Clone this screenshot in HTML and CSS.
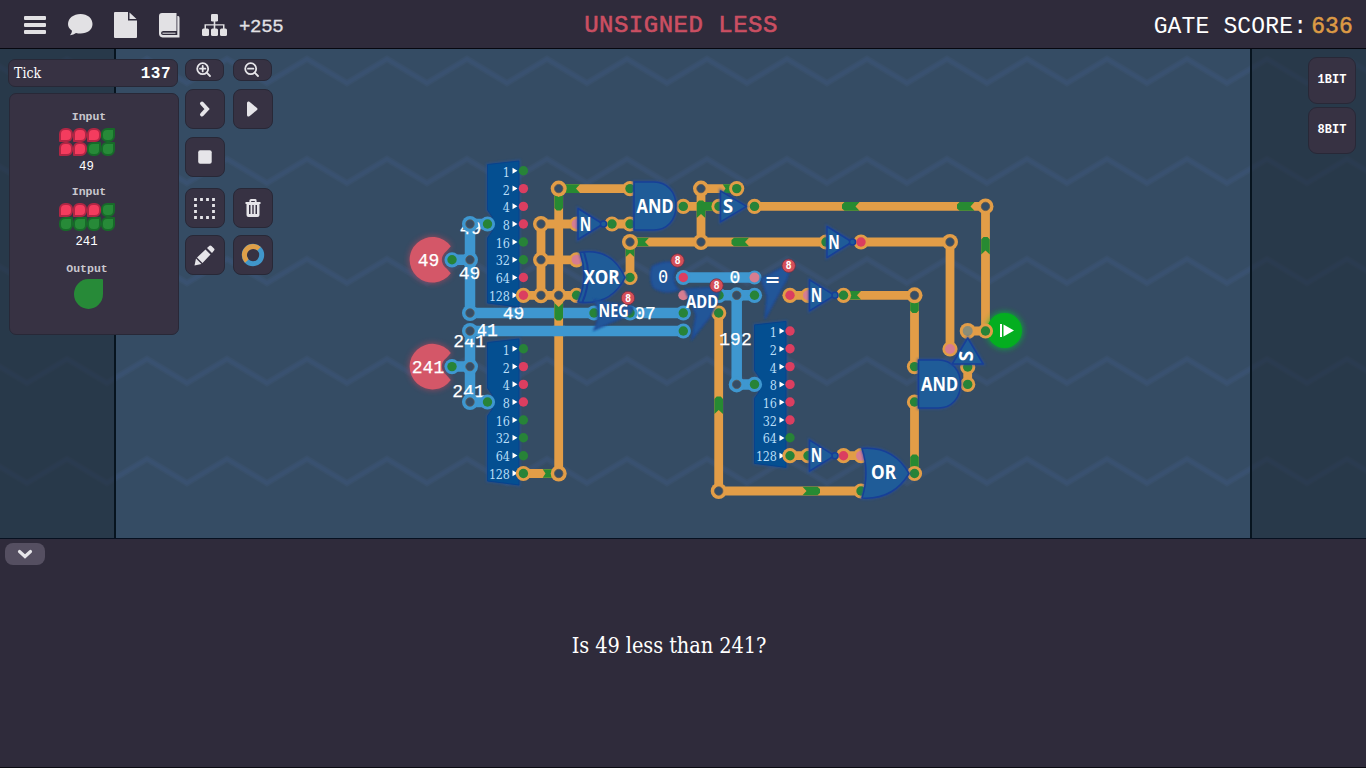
FILE: index.html
```html
<!DOCTYPE html>
<html lang="en">
<head>
<meta charset="utf-8">
<title>Unsigned Less</title>
<link rel="stylesheet" href="styles.css">
</head>
<body>
<header class="topbar">
  <nav class="menu">
    <svg class="menu-icon" width="22" height="18" viewBox="0 0 22 18"><rect y="0" width="22" height="4" rx="1"/><rect y="7" width="22" height="4" rx="1"/><rect y="14" width="22" height="4" rx="1"/></svg>
    <svg class="menu-icon" width="25" height="22" viewBox="0 0 25 22"><path d="M12.500 0C19.500 0 24.500 4.200 24.500 10S19.500 19.500 12.500 19.500Q10 19.500 8 19Q5.500 21 2 21.300Q4 19 4 16.800Q0 14 0 10C0 4.200 5.500 0 12.500 0Z"/></svg>
    <svg class="menu-icon" width="23" height="26" viewBox="0 0 23 26"><path d="M1 0H14V8.500H23V25Q23 26 22 26H1Q0 26 0 25V1Q0 0 1 0ZM15.500 .5L22.500 7H15.500Z"/></svg>
    <svg class="menu-icon" width="21" height="25" viewBox="0 0 21 25"><path d="M3 0H17.500V18H4Q2 18.500 2 20.300Q2.200 22 4 22H18.300V3H19.200Q20.500 3 20.500 5V24.500H3.500Q0 24 0 20.500V3Q0 0 3 0Z"/><path class="book-page" d="M3.500 20.200H16.500"/></svg>
    <span class="cluster">
      <svg class="menu-icon" width="25" height="22" viewBox="0 0 25 22"><rect x="9" width="7" height="7.500" rx="1.300"/><rect y="14.500" width="7" height="7.500" rx="1.500"/><rect x="9" y="14.500" width="7" height="7.500" rx="1.500"/><rect x="18" y="14.500" width="7" height="7.500" rx="1.500"/><path d="M11.700 7H13.300V10.200H22.500V15H21V11.500H13.300V15H11.700V11.500H4V15H2.500V10.200H11.700Z"/></svg>
      <span class="bonus">+255</span>
    </span>
  </nav>
  <h1 class="title">UNSIGNED LESS</h1>
  <p class="score">GATE SCORE:<b class="score-value">636</b></p>
</header>

<main class="stage">
  <svg class="board" width="1366" height="489" viewBox="0 49 1366 489">
    <defs>
      <pattern id="zig" x="27" y="49" width="80" height="100" patternUnits="userSpaceOnUse"><path class="zig faint" d="M-10 28L0 34L40 10L80 34L90 28"/><path class="zig" d="M-10 28L0 34L40 10L80 34L90 28"/></pattern>
      <filter id="glow" x="-50%" y="-50%" width="200%" height="200%"><feGaussianBlur stdDeviation="3"/></filter>
      <filter id="soft" x="-30%" y="-30%" width="160%" height="160%"><feGaussianBlur stdDeviation="1"/></filter>
      <g id="o"><circle class="ring-o" r="8"/><circle class="hole" r="4.200"/></g>
      <g id="b"><circle class="ring-b" r="8"/><circle class="hole" r="4.200"/></g>
      <g id="og"><circle class="ring-o" r="7.600"/><circle class="on" r="4.700"/></g>
      <g id="or"><circle class="ring-o" r="7.600"/><circle class="off" r="4.700"/></g>
      <g id="op"><circle class="ring-o" r="7.600"/><circle class="faded" r="5"/></g>
      <g id="bg"><circle class="ring-b" r="7.600"/><circle class="on" r="4.700"/></g>
      <g id="br"><circle class="ring-b" r="7.600"/><circle class="off" r="4.700"/></g>
      <circle id="g" class="on" r="4.700"/>
      <circle id="r" class="off" r="4.700"/>
      <path id="a" class="pulse" d="M-6 -4.300H9L5 0L9 4.300H-6L-8.500 2V-2Z"/>
      <g id="and"><path class="gate-glow" d="M0 0H20C33 0 42 10 42 24S33 48 20 48H0Z"/><path class="gate" d="M0 0H20C33 0 42 10 42 24S33 48 20 48H0Z"/></g>
      <g id="not"><path class="gate-glow" d="M0 -15.500L26 0L0 15.500Z"/><path class="gate" d="M0 -15.500L25 0L0 15.500Z"/><circle class="gate" cx="25.500" r="3"/></g>
      <g id="switch"><path class="gate-glow" d="M0 -15.500L26 0L0 15.500Z"/><path class="gate" d="M0 -15.500L26 0L0 15.500Z"/></g>
      <path id="src" d="M19 -13.500A22.800 22.800 0 1 0 19 13.500L15 9Q10 5 10 0T15 -9Z"/>
      <g id="splitter">
        <path class="split-glow" d="M0 -59.500L31.500 -63V83L0 79V14Q6 8 6 0T0 -14Z"/>
        <path class="split" d="M0 -59.500L31.500 -63V83L0 79V14Q6 8 6 0T0 -14Z"/>
        <g class="split-text">
          <text x="22" y="-47.300">1</text><text x="22" y="-29.500">2</text><text x="22" y="-11.700">4</text><text x="22" y="5.500">8</text><text x="22" y="23.500">16</text><text x="22" y="41.300">32</text><text x="22" y="59.100">64</text><text x="22" y="76.900" textLength="20.500" lengthAdjust="spacingAndGlyphs">128</text>
        </g>
        <path class="tick" d="M25 -56.300l5 3l-5 3zM25 -38.500l5 3l-5 3zM25 -20.700l5 3l-5 3zM25 -2.900l5 3l-5 3zM25 14.900l5 3l-5 3zM25 32.700l5 3l-5 3zM25 50.500l5 3l-5 3zM25 68.300l5 3l-5 3z"/>
      </g>
      <g id="badge"><circle class="badge" r="6.700"/><text class="badge-text" y="3.600">8</text></g>
    </defs>

    <rect x="0" y="49" width="1366" height="489" fill="url(#zig)"/>
    <rect class="shade" x="0" y="49" width="115" height="489"/>
    <rect class="shade" x="1251" y="49" width="115" height="489"/>
    <path class="edge" d="M115 49V538M1251 49V538"/>

    <!-- bus wires -->
    <path class="bus" d="M487.500 224H470V313H683M452 259.800H470M683 331H470V402H487.500M452 366.600H470M683 277.500H754.500M719 295.300H754.500M736.700 295.300V384.400H754.500"/>

    <!-- bit wires -->
    <path class="wire" d="M630 188.600H558.700V473.500H523.400M523.400 295.300H576.600M541 295.300V224H576.600M541 259.800H576.600M612 224H630M630 277.500V242H826M861 242H950V349M701 242V188.600H737M683 206.400H719M754.500 206.400H985.500V331H967.700M790 295.300H808M843.500 295.300H914.500V366.600M914.500 402V473.500M967.700 366V384.400M790 455.700H808M843.500 455.700H861M718.700 313V491H861"/>
    <path class="bus-cross" d="M553 331H565"/>

    <g class="pulses">
      <use href="#a" x="571" y="188.600"/>
      <use href="#a" transform="translate(558.700 202) rotate(-90)"/>
      <use href="#a" transform="translate(558.700 312) rotate(-90)"/>
      <use href="#a" transform="translate(549 473.500) rotate(180) scale(.7 1)"/>
      <use href="#a" transform="translate(701 209) rotate(90)"/>
      <use href="#a" x="710" y="206.400"/>
      <use href="#a" transform="translate(729 188.600) rotate(180) scale(.7 1)"/>
      <use href="#a" x="640" y="242"/>
      <use href="#a" transform="translate(630 248) rotate(90)"/>
      <use href="#a" x="740" y="242"/>
      <use href="#a" x="850.500" y="206.400"/>
      <use href="#a" x="965.500" y="206.400"/>
      <use href="#a" transform="translate(985.500 245.500) rotate(90)"/>
      <use href="#a" x="852" y="295.300"/>
      <use href="#a" transform="translate(914.500 304.500) rotate(-90)"/>
      <use href="#a" transform="translate(914.500 463) rotate(90)"/>
      <use href="#a" transform="translate(718.700 405) rotate(90)"/>
      <use href="#a" transform="translate(811.500 491) rotate(180)"/>
    </g>

    <!-- bus values -->
    <g class="value">
      <text x="470.500" y="234">49</text><text x="469.500" y="279">49</text><text x="513.500" y="319">49</text>
      <text x="487" y="336">41</text><text x="469.500" y="347">241</text><text x="468.500" y="396.500">241</text>
      <text x="645" y="319">07</text><text x="735" y="283">0</text><text x="735.500" y="345">192</text>
    </g>

    <!-- sources -->
    <use class="source-glow" href="#src" x="431.800" y="259.800"/><use class="source" href="#src" x="431.800" y="259.800"/>
    <use class="source-glow" href="#src" x="431.800" y="366.600"/><use class="source" href="#src" x="431.800" y="366.600"/>
    <g class="value"><text x="428.500" y="266">49</text><text x="428" y="373">241</text></g>

    <!-- junctions -->
    <use href="#b" x="470" y="224"/><use href="#b" x="470" y="259.800"/><use href="#b" x="470" y="313"/><use href="#b" x="470" y="331"/><use href="#b" x="470" y="366.600"/><use href="#b" x="470" y="402"/><use href="#b" x="736.700" y="295.300"/><use href="#b" x="736.700" y="384.400"/>
    <use href="#o" x="541" y="224"/><use href="#o" x="541" y="259.800"/><use href="#o" x="541" y="295.300"/><use href="#o" x="558.700" y="188.600"/><use href="#o" x="558.700" y="295.300"/><use href="#o" x="558.700" y="473.500"/>
    <use href="#o" x="630" y="242"/><use href="#o" x="701" y="188.600"/><use href="#o" x="701" y="242"/><use href="#o" x="985.500" y="206.400"/><use href="#o" x="950" y="242"/><use href="#o" x="914.500" y="295.300"/><use href="#o" x="718.700" y="491"/>

    <!-- pins -->
    <use href="#splitter" x="487.500" y="224"/><use href="#splitter" x="487.500" y="402"/><use href="#splitter" x="754.500" y="384.400"/>
    <use href="#bg" x="452" y="259.800"/><use href="#bg" x="487.500" y="224"/><use href="#bg" x="452" y="366.600"/><use href="#bg" x="487.500" y="402"/><use href="#bg" x="754.500" y="384.400"/><use href="#bg" x="754.500" y="295.300"/><use href="#bg" x="594" y="313"/><use href="#bg" x="630" y="313"/><use href="#bg" x="683.300" y="313"/><use href="#bg" x="683.300" y="331"/><use href="#bg" x="719" y="295.300"/><circle class="ring-b" cx="754.500" cy="277.500" r="7"/><circle class="faded" cx="754.500" cy="277.500" r="5"/>
    <circle class="faded" cx="683.300" cy="295.300" r="5"/>
    <use href="#or" x="523.400" y="295.300"/><use href="#og" x="523.400" y="473.500"/><use href="#op" x="576.600" y="224"/><use href="#op" x="576.600" y="259.800"/><use href="#og" x="576.600" y="295.300"/>
    <use href="#og" x="612" y="224"/><use href="#og" x="630" y="224"/><use href="#og" x="630" y="188.600"/><use href="#og" x="630" y="277.500"/><use href="#og" x="683.300" y="206.400"/><use href="#og" x="719" y="206.400"/><use href="#og" x="736.700" y="188.600"/><use href="#og" x="754.500" y="206.400"/><use href="#og" x="826" y="242"/><use href="#or" x="861" y="242"/>
    <use href="#or" x="790" y="295.300"/><use href="#op" x="808" y="295.300"/><use href="#og" x="843.500" y="295.300"/><use href="#og" x="914.500" y="366.600"/><use href="#og" x="914.500" y="402"/><use href="#og" x="914.500" y="473.500"/><use href="#op" x="950" y="349"/><circle class="ring-o" cx="967.700" cy="331" r="8"/><circle class="idle" cx="967.700" cy="331" r="5"/>
    <use href="#og" x="967.700" y="367"/><use href="#og" x="967.700" y="384.400"/><use href="#og" x="790" y="455.700"/><use href="#og" x="808" y="455.700"/><use href="#or" x="843.500" y="455.700"/><use href="#op" x="861" y="455.700"/><use href="#og" x="861" y="491"/><use href="#og" x="718.700" y="313"/>
    <use href="#g" x="523.400" y="170.800"/><use href="#r" x="523.400" y="188.600"/><use href="#r" x="523.400" y="206.400"/><use href="#r" x="523.400" y="224"/><use href="#g" x="523.400" y="242"/><use href="#g" x="523.400" y="259.800"/><use href="#r" x="523.400" y="277.500"/>
    <use href="#g" x="523.400" y="348.800"/><use href="#r" x="523.400" y="366.600"/><use href="#r" x="523.400" y="384.400"/><use href="#r" x="523.400" y="402"/><use href="#g" x="523.400" y="420"/><use href="#g" x="523.400" y="437.800"/><use href="#g" x="523.400" y="455.700"/>
    <use href="#r" x="790" y="331"/><use href="#r" x="790" y="348.800"/><use href="#r" x="790" y="366.600"/><use href="#r" x="790" y="384.400"/><use href="#r" x="790" y="402"/><use href="#r" x="790" y="420"/><use href="#g" x="790" y="437.800"/>

    <!-- gates -->
    <use href="#and" x="634" y="182"/><use href="#and" x="918.500" y="360"/>
    <use href="#not" x="578" y="224"/><use href="#not" x="827" y="242"/><use href="#not" x="809.500" y="295.300"/><use href="#not" x="809.500" y="455.700"/>
    <use href="#switch" x="720.500" y="206.400"/><use href="#switch" transform="translate(967.700 364) rotate(-90)"/>
    <path class="gate-glow" d="M580 252.500Q611 247 625 277.500Q611 306 578 302Q589 277 580 252.500Z"/>
    <path class="gate" d="M580 252.500Q611 247 625 277.500Q611 306 578 302Q589 277 580 252.500Z"/><path class="gate-line" d="M584 252.500Q593 277 582.500 302"/>
    <path class="gate-glow" d="M862 448.500Q893 446 909 473.500Q893 500 862 498Q870 473 862 448.500Z"/>
    <path class="gate" d="M862 448.500Q893 446 909 473.500Q893 500 862 498Q870 473 862 448.500Z"/>
    <path class="blob" d="M594 300L633 307Q633 314 626 316L594 330Q602 314 594 300Z"/>
    <path class="blob" d="M685 289L720 287Q719 302 709 318L692 339L696 315Z"/>
    <path class="blob" d="M761 279L789 264Q790 276 783 286L765 319L767 296Z"/>
    <path class="blob" d="M652 267Q665 259 680 264A17 17 0 0 0 679 290Q662 295 653 287Q649 278 652 267Z"/>
    <use href="#br" x="683.300" y="277.500"/>

    <g class="gate-text">
      <text x="655" y="212.700" textLength="37" lengthAdjust="spacingAndGlyphs">AND</text><text x="939.500" y="390.500" textLength="37" lengthAdjust="spacingAndGlyphs">AND</text><text x="601.500" y="284" textLength="36" lengthAdjust="spacingAndGlyphs">XOR</text><text x="883.500" y="479.200" textLength="25" lengthAdjust="spacingAndGlyphs">OR</text>
      <text x="585.500" y="230.500" textLength="11.500" lengthAdjust="spacingAndGlyphs">N</text><text x="834" y="248.500" textLength="11.500" lengthAdjust="spacingAndGlyphs">N</text><text x="816.500" y="301.800" textLength="11.500" lengthAdjust="spacingAndGlyphs">N</text><text x="816.500" y="462" textLength="11.500" lengthAdjust="spacingAndGlyphs">N</text><text x="728" y="213">S</text><text transform="translate(973 356) rotate(-90)">S</text>
      <text class="small-gate" x="613.500" y="317.200" textLength="30" lengthAdjust="spacingAndGlyphs">NEG</text><text class="small-gate" x="702" y="307.500" textLength="32" lengthAdjust="spacingAndGlyphs">ADD</text><text x="772.500" y="287" textLength="14" lengthAdjust="spacingAndGlyphs">=</text><text class="zero" x="663" y="283">0</text>
    </g>
    <use href="#badge" x="677.500" y="260.500"/><use href="#badge" x="716.500" y="285.500"/><use href="#badge" x="628" y="298"/><use href="#badge" x="788.700" y="265.700"/>

    <!-- output -->
    <circle class="out-glow" cx="1004.500" cy="330.500" r="18"/>
    <circle class="out" cx="1004.500" cy="330.500" r="17.500"/>
    <use href="#og" x="985.500" y="331"/>
    <path class="tick" d="M1000 324H1002V337H1000ZM1003.500 324.500L1014 330.500L1003.500 336.500Z"/>
  </svg>

  <div class="overlay">
    <aside class="status">
      <div class="tick-row"><span class="tick-label">Tick</span><span class="tick-count">137</span></div>
      <section class="ports">
        <div class="port"><h2 class="port-name">Input</h2>
          <div class="bits"><i class="bit red"></i><i class="bit red"></i><i class="bit red"></i><i class="bit"></i><i class="bit red"></i><i class="bit red"></i><i class="bit"></i><i class="bit"></i></div>
          <span class="port-value">49</span></div>
        <div class="port"><h2 class="port-name">Input</h2>
          <div class="bits"><i class="bit red"></i><i class="bit red"></i><i class="bit red"></i><i class="bit"></i><i class="bit"></i><i class="bit"></i><i class="bit"></i><i class="bit"></i></div>
          <span class="port-value">241</span></div>
        <div class="port"><h2 class="port-name out-name">Output</h2><i class="drop"></i></div>
      </section>
    </aside>
    <div class="tools">
      <button class="tool flat"><svg width="16" height="16" viewBox="0 0 16 16"><circle class="line" cx="6.700" cy="6.700" r="5.500"/><path class="line" d="M10.700 10.700L14 14M4 6.700H9.400M6.700 4V9.400"/></svg></button>
      <button class="tool flat"><svg width="16" height="16" viewBox="0 0 16 16"><circle class="line" cx="6.700" cy="6.700" r="5.500"/><path class="line" d="M10.700 10.700L14 14M4 6.700H9.400"/></svg></button>
      <button class="tool"><svg width="14" height="18" viewBox="0 0 14 18"><path class="chev" d="M4 3.500L9 9L4 14.500"/></svg></button>
      <button class="tool"><svg width="14" height="18" viewBox="0 0 14 18"><path d="M1 3Q1 1 3 1.500L5 3L11 8Q12 9 11 10L5 15L3 16.500Q1 17 1 15Z"/></svg></button>
      <button class="tool"><svg width="14" height="14" viewBox="0 0 14 14"><rect width="13.500" height="13.500" x=".2" y=".2" rx="2"/></svg></button>
      <span></span>
      <button class="tool gap"><svg width="21" height="21" viewBox="0 0 21 21"><rect class="dashed" x="1.500" y="1.500" width="18" height="18"/></svg></button>
      <button class="tool gap"><svg width="16" height="18" viewBox="0 0 16 18"><path class="line" d="M5.300 3V1.500Q5.300 1 6 1H10Q10.700 1 10.700 1.500V3"/><path fill-rule="evenodd" d="M.5 3H15.500V5H14.500V16Q14.500 18 12.500 18H3.500Q1.500 18 1.500 16V5H.5ZM4 6V15H5.500V6ZM7.300 6V15H8.700V6ZM10.500 6V15H12V6Z"/></svg></button>
      <button class="tool"><svg width="21" height="21" viewBox="0 0 21 21"><path d="M.5 20.500L2 13.500L7.500 19ZM3 12.500L11.500 4.500L16.500 9.500L8.500 18ZM13 3L15.500 .8Q16.500 0 17.500 1L20 3.500Q21 4.500 20 5.500L18 8Z"/></svg></button>
      <button class="tool"><svg width="24" height="24" viewBox="0 0 24 24"><circle class="swatch-blue" cx="12" cy="12" r="8.700"/><path class="swatch-orange" d="M5.800 18.100A8.700 8.700 0 0 1 18.100 5.800"/></svg></button>
    </div>
    <div class="palette"><button class="bank">1BIT</button><button class="bank">8BIT</button></div>
  </div>
</main>

<footer class="console">
  <button class="collapse"><svg width="16" height="10" viewBox="0 0 16 10"><path class="chev down" d="M2.500 2.500L8 7.500L13.500 2.500"/></svg></button>
  <p class="question">Is 49 less than 241?</p>
</footer>
</body>
</html>
```
FILE: styles.css
```css
* { box-sizing: border-box; }
body { margin: 0; width: 1366px; height: 768px; overflow: hidden; display: flex; flex-direction: column; background: #2f2b3b; color: #fff; font-family: "Liberation Mono", monospace; }
h1, h2, p { margin: 0; font-weight: normal; }
button { border: 0; padding: 0; color: inherit; font: inherit; }

.topbar { height: 49px; border-bottom: 1px solid #06070f; display: grid; grid-template-columns: 1fr auto 1fr; align-items: center; padding: 2px 13px 0 24px; }
.menu { display: flex; align-items: center; }
.menu-icon { fill: #e2e1e4; margin-right: 22px; flex: none; }
.menu-icon:nth-child(2) { margin-right: 21px; }
.book-page { stroke: #e2e1e4; stroke-width: 1; fill: none; }
.cluster { display: flex; align-items: center; }
.cluster .menu-icon { margin: 0 12px 0 0; }
.bonus { font-size: 19px; letter-spacing: -.3px; color: #e2e1e4; padding-top: 3px; -webkit-text-stroke: .3px #e2e1e4; }
.title { font-size: 24px; letter-spacing: .5px; color: #cb4f62; -webkit-text-stroke: .6px #cb4f62; padding: 1px 15px 0 0; }
.score { justify-self: end; font-size: 23px; letter-spacing: .15px; white-space: nowrap; padding-top: 3px; }
.score-value { font-weight: normal; color: #dc9a45; margin-left: 4px; -webkit-text-stroke: .5px #dc9a45; }

.stage { position: relative; height: 490px; background: #354c64; border-bottom: 1px solid #071020; }
.board { position: absolute; left: 0; top: 0; display: block; }
.zig { fill: none; stroke: #395170; stroke-width: 3.500; }
.faint { stroke-width: 6.500; stroke-opacity: .5; }
.shade { fill: #1c2630; fill-opacity: .5; }
.edge { stroke: #07141f; stroke-width: 2; }
.bus, .bus-cross { fill: none; stroke: #3e97d0; stroke-width: 10.500; }
.wire { fill: none; stroke: #e29d47; stroke-width: 8.800; }
.ring-o { fill: #e29d47; }
.ring-b { fill: #3e97d0; }
.hole { fill: #354d66; stroke: #5e5750; stroke-width: .8; }
.on { fill: #278338; }
.off { fill: #db3e60; }
.faded { fill: #d77d90; }
.idle { fill: #8a8d79; }
.pulse { fill: #278a32; }
.gate { fill: #1f5c98; stroke: #173f97; stroke-width: 1.500; stroke-linejoin: round; }
.gate-line { fill: none; stroke: #173f97; stroke-width: 2; }
.gate-glow { fill: #254fa5; stroke: #254fa5; stroke-width: 3; filter: url(#soft); opacity: .65; }
.blob { fill: #215798; stroke: #1d4897; stroke-width: 1.500; filter: url(#soft); }
.split { fill: #044f91; stroke: #08428c; stroke-width: 1; }
.split-glow { fill: none; stroke: #22529d; stroke-width: 3; filter: url(#soft); opacity: .6; }
.split-text { font: 12.500px "DejaVu Serif Condensed", "DejaVu Serif", serif; fill: #b6ddf7; text-anchor: end; letter-spacing: -.3px; }
.tick { fill: #fff; }
.value { font: 18px "Liberation Mono", monospace; fill: #fff; stroke: #fff; stroke-width: .25; text-anchor: middle; }
.source { fill: #d45768; }
.source-glow { fill: #df4458; filter: url(#glow); opacity: .65; }
.gate-text { font: bold 19px "Noto Sans", sans-serif; fill: #fff; text-anchor: middle; }
.small-gate { font-size: 17px; }
.zero { font: 17px "DejaVu Sans Mono", monospace; }
.badge { fill: #d44f59; stroke: #6e2e43; stroke-width: .8; }
.badge-text { font: bold 10px Roboto, sans-serif; fill: #fff; text-anchor: middle; }
.out { fill: #04ae20; }
.out-glow { fill: #06c42b; filter: url(#glow); opacity: .8; }

.overlay { position: relative; display: flex; padding: 8px 10px 0 9px; align-items: flex-start; }
.status { width: 170px; padding-top: 2px; }
.tick-row, .ports, .tool, .bank { background: #373243; border: 1px solid #282837; }
.tick-row { height: 28px; border-radius: 7px; display: flex; justify-content: space-between; align-items: center; padding: 0 6px 0 5px; margin: 0 1px 0 -1px; }
.tick-label { font: 14px "DejaVu Serif Condensed", "DejaVu Serif", serif; letter-spacing: 0; }
.tick-count { font-size: 16px; font-weight: bold; letter-spacing: .5px; padding-top: 1px; }
.ports { margin-top: 6px; height: 242px; border-radius: 7px; padding: 15px 14px 0 0; }
.port { height: 75px; display: flex; flex-direction: column; align-items: center; }
.port-name { font-size: 11.500px; font-weight: bold; line-height: 14px; color: #c9c7ce; margin-left: 4px; padding-top: 1px; height: 14px; }
.out-name { margin: 2px 0 4px; }
.bits { display: grid; grid-template-columns: repeat(4, 14px); grid-auto-rows: 14px; margin-top: 5px; }
.bit { background: #278a38; border: 2px solid #176a29; border-radius: 6px 1px 6px 6px; }
.bit.red { background: #f43c5e; border-color: #b02644; border-radius: 6px 6px 6px 1px; }
.port-value { font-size: 12.300px; line-height: 22px; margin-right: 1px; }
.drop { width: 29px; height: 30px; background: #278a38; border-radius: 50% 1px 50% 50%; margin-left: 2px; }

.tools { display: grid; grid-template-columns: 40px 40px; gap: 8px; margin: 2px 0 0 6px; }
.tool { height: 40px; border-radius: 8px; display: flex; align-items: center; justify-content: center; padding-right: 1px; }
.tool svg { fill: #e6e5e9; }
.tool.flat { height: 22px; margin-right: 1px; }
.tool.gap { margin: 3px 0 -1px; }
.tool .line { fill: none; stroke: #e6e5e9; stroke-width: 1.800; stroke-linecap: round; }
.tool .chev, .down { fill: none; stroke: #e6e5e9; stroke-width: 4; stroke-linecap: round; stroke-linejoin: miter; }
.down { stroke-width: 3.200; }
.tool .dashed { fill: none; stroke: #e6e5e9; stroke-width: 2.800; stroke-dasharray: 2.800 3.200; stroke-dashoffset: 1.400; }
.tool .swatch-blue { fill: none; stroke: #4096ca; stroke-width: 5; }
.tool .swatch-orange { fill: none; stroke: #df9f48; stroke-width: 5; }
.palette { margin-left: auto; display: flex; flex-direction: column; gap: 3px; }
.bank { width: 48px; height: 47px; border-radius: 9px; border-width: 1px; font-size: 12px; font-weight: bold; padding-bottom: 2px; }

.console { position: relative; flex: 1; display: grid; grid-template-rows: 26px 1fr; border-bottom: 1px solid #0b0b12; }
.collapse { width: 40px; height: 22px; margin: 4px 0 0 5px; border-radius: 8px; background: #554f61; display: flex; align-items: center; justify-content: center; }
.question { font: 21.500px "DejaVu Serif Condensed", "DejaVu Serif", serif; letter-spacing: -.05px; text-align: center; line-height: 28px; padding: 67px 28px 0 0; }
```
